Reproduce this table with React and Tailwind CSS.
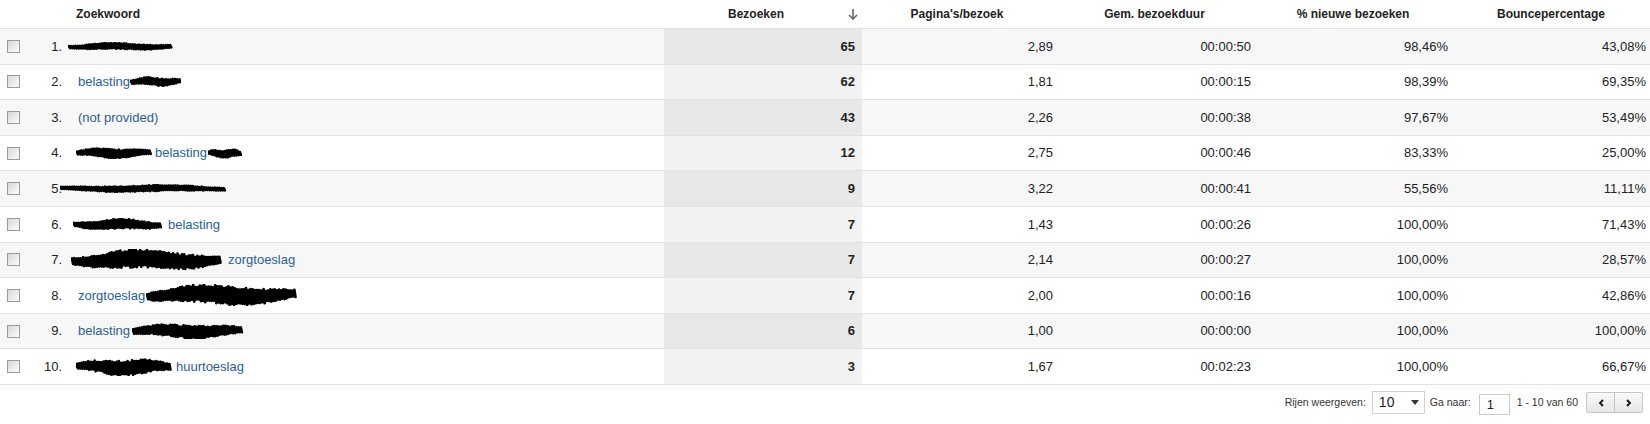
import React from "react";

// black marker scribbles that hide parts of the keywords
const Scribble = ({ w, h, seed, className = "" }) => {
  let s = seed * 7919;
  const rnd = () => {
    s = (s * 9301 + 49297) % 233280;
    return s / 233280;
  };
  let d = `M1 ${h / 2}`;
  for (let x = 1; x < w - 1; x += 2.2) {
    const t = x / w;
    const amp = (h / 2 - 1.5) * (0.35 + 0.65 * Math.sin(Math.PI * t)) * (0.7 + rnd() * 0.3);
    const cy = h / 2 + Math.sin(t * 9 + seed) * (h * 0.08);
    d += ` L${x.toFixed(1)} ${(cy - amp).toFixed(1)} L${(x + 1.1).toFixed(1)} ${(cy + amp).toFixed(1)}`;
  }
  return (
    <svg width={w} height={h} viewBox={`0 0 ${w} ${h}`} className={`shrink-0 ${className}`}>
      <path d={d} fill="none" stroke="#000" strokeWidth="2.6" strokeLinejoin="round" strokeLinecap="round" />
    </svg>
  );
};

const rows = [
  { n: 1, kw: [{ s: [105, 9, 1], ml: "-ml-[10px]" }], v: 65, p: "2,89", d: "00:00:50", nw: "98,46%", b: "43,08%" },
  { n: 2, kw: [{ t: "belasting" }, { s: [51, 11, 2], ml: "ml-0" }], v: 62, p: "1,81", d: "00:00:15", nw: "98,39%", b: "69,35%" },
  { n: 3, kw: [{ t: "(not provided)" }], v: 43, p: "2,26", d: "00:00:38", nw: "97,67%", b: "53,49%" },
  {
    n: 4,
    kw: [{ s: [76, 12, 3], ml: "-ml-[2px]" }, { t: "belasting", ml: "ml-[3px]" }, { s: [34, 11, 4], ml: "ml-[1px]" }],
    v: 12, p: "2,75", d: "00:00:46", nw: "83,33%", b: "25,00%",
  },
  { n: 5, kw: [{ s: [166, 9, 5], ml: "-ml-[18px]" }], v: 9, p: "3,22", d: "00:00:41", nw: "55,56%", b: "11,11%" },
  { n: 6, kw: [{ s: [89, 13, 6], ml: "-ml-[5px]" }, { t: "belasting", ml: "ml-[6px]" }], v: 7, p: "1,43", d: "00:00:26", nw: "100,00%", b: "71,43%" },
  { n: 7, kw: [{ s: [151, 22, 7], ml: "-ml-[7px]" }, { t: "zorgtoeslag", ml: "ml-[6px]" }], v: 7, p: "2,14", d: "00:00:27", nw: "100,00%", b: "28,57%" },
  { n: 8, kw: [{ t: "zorgtoeslag" }, { s: [151, 22, 8], ml: "ml-[1px]" }], v: 7, p: "2,00", d: "00:00:16", nw: "100,00%", b: "42,86%" },
  { n: 9, kw: [{ t: "belasting" }, { s: [112, 16, 9], ml: "ml-[2px]" }], v: 6, p: "1,00", d: "00:00:00", nw: "100,00%", b: "100,00%" },
  { n: 10, kw: [{ s: [96, 18, 10], ml: "-ml-[2px]" }, { t: "huurtoeslag", ml: "ml-[4px]" }], v: 3, p: "1,67", d: "00:02:23", nw: "100,00%", b: "66,67%" },
];

const grid = "grid grid-cols-[664px_198px_198px_198px_198px_194px]";

const Checkbox = () => (
  <span className="block w-[13px] h-[13px] border border-[#9a9a9a] bg-linear-to-br from-[#d6d6d6] to-white" />
);

export default function App() {
  return (
    <div className="w-[1650px] h-[424px] bg-white text-[#222] font-['Liberation_Sans',Arial,sans-serif] overflow-hidden">
      <div className={`${grid} h-[29px] border-b border-[#e2e2e2] text-[12px] font-bold`}>
        <div className="flex items-center pl-[76px]">Zoekwoord</div>
        <div className="flex items-center">
          <span className="flex-1 text-center">Bezoeken</span>
          <svg width="10" height="12" viewBox="0 0 10 12" className="mr-[4px]">
            <path d="M5 1 V11 M1 7 L5 11 L9 7" fill="none" stroke="#666" strokeWidth="1.6" />
          </svg>
        </div>
        <div className="flex items-center justify-center pr-[8px]">Pagina's/bezoek</div>
        <div className="flex items-center justify-center pr-[9px]">Gem. bezoekduur</div>
        <div className="flex items-center justify-center pr-[8px]">% nieuwe bezoeken</div>
        <div className="flex items-center justify-center pr-[4px]">Bouncepercentage</div>
      </div>

      {rows.map((r) => {
        const odd = r.n % 2 === 1;
        return (
          <div
            key={r.n}
            className={`${grid} h-[35.6px] border-b border-[#e2e2e2] text-[13px] ${odd ? "bg-[#f7f7f7]" : "bg-white"}`}
          >
            <div className="flex items-center">
              <div className="pl-[7px]">
                <Checkbox />
              </div>
              <div className="w-[42px] text-right">{r.n}.</div>
              <div className="flex items-center pl-[16px] text-[#2a6099]">
                {r.kw.map((k, i) =>
                  k.t ? (
                    <span key={i} className={k.ml || ""}>
                      {k.t}
                    </span>
                  ) : (
                    <Scribble key={i} w={k.s[0]} h={k.s[1]} seed={k.s[2]} className={k.ml} />
                  )
                )}
              </div>
            </div>
            <div className={`flex items-center justify-end pr-[7px] font-bold ${odd ? "bg-[#e8e8e8]" : "bg-[#f2f2f2]"}`}>
              {r.v}
            </div>
            <div className="flex items-center justify-end pr-[7px]">{r.p}</div>
            <div className="flex items-center justify-end pr-[7px]">{r.d}</div>
            <div className="flex items-center justify-end pr-[8px]">{r.nw}</div>
            <div className="flex items-center justify-end pr-[4px]">{r.b}</div>
          </div>
        );
      })}

      <div className="flex items-center justify-end pr-[7px] pt-[6px] text-[10.5px] text-[#333]">
        <span>Rijen weergeven:</span>
        <div className="ml-[6px] flex items-center w-[53px] h-[23px] border border-[#d0d0d0] bg-white pl-[6px] pr-[5px]">
          <span className="text-[14px] text-[#222]">10</span>
          <svg width="8" height="5" viewBox="0 0 8 5" className="ml-auto">
            <path d="M0 0 H8 L4 5 Z" fill="#333" />
          </svg>
        </div>
        <span className="ml-[5px]">Ga naar:</span>
        <div className="ml-[8px] mt-[3px] w-[31px] h-[21px] border border-[#c8c8c8] bg-white flex items-center pl-[7px] text-[13px] text-[#222]">
          1
        </div>
        <span className="ml-[7px]">1 - 10 van 60</span>
        <div className="ml-[8px] flex h-[21px] rounded-[2px] border border-[#c6c6c6] bg-linear-to-b from-[#fafafa] to-[#e6e6e6]">
          <span className="w-[28px] flex items-center justify-center border-r border-[#c6c6c6]">
            <svg width="6" height="8" viewBox="0 0 6 8">
              <path d="M5 1 L2 4 L5 7" fill="none" stroke="#111" strokeWidth="1.8" />
            </svg>
          </span>
          <span className="w-[27px] flex items-center justify-center">
            <svg width="6" height="8" viewBox="0 0 6 8">
              <path d="M1 1 L4 4 L1 7" fill="none" stroke="#111" strokeWidth="1.8" />
            </svg>
          </span>
        </div>
      </div>
    </div>
  );
}
